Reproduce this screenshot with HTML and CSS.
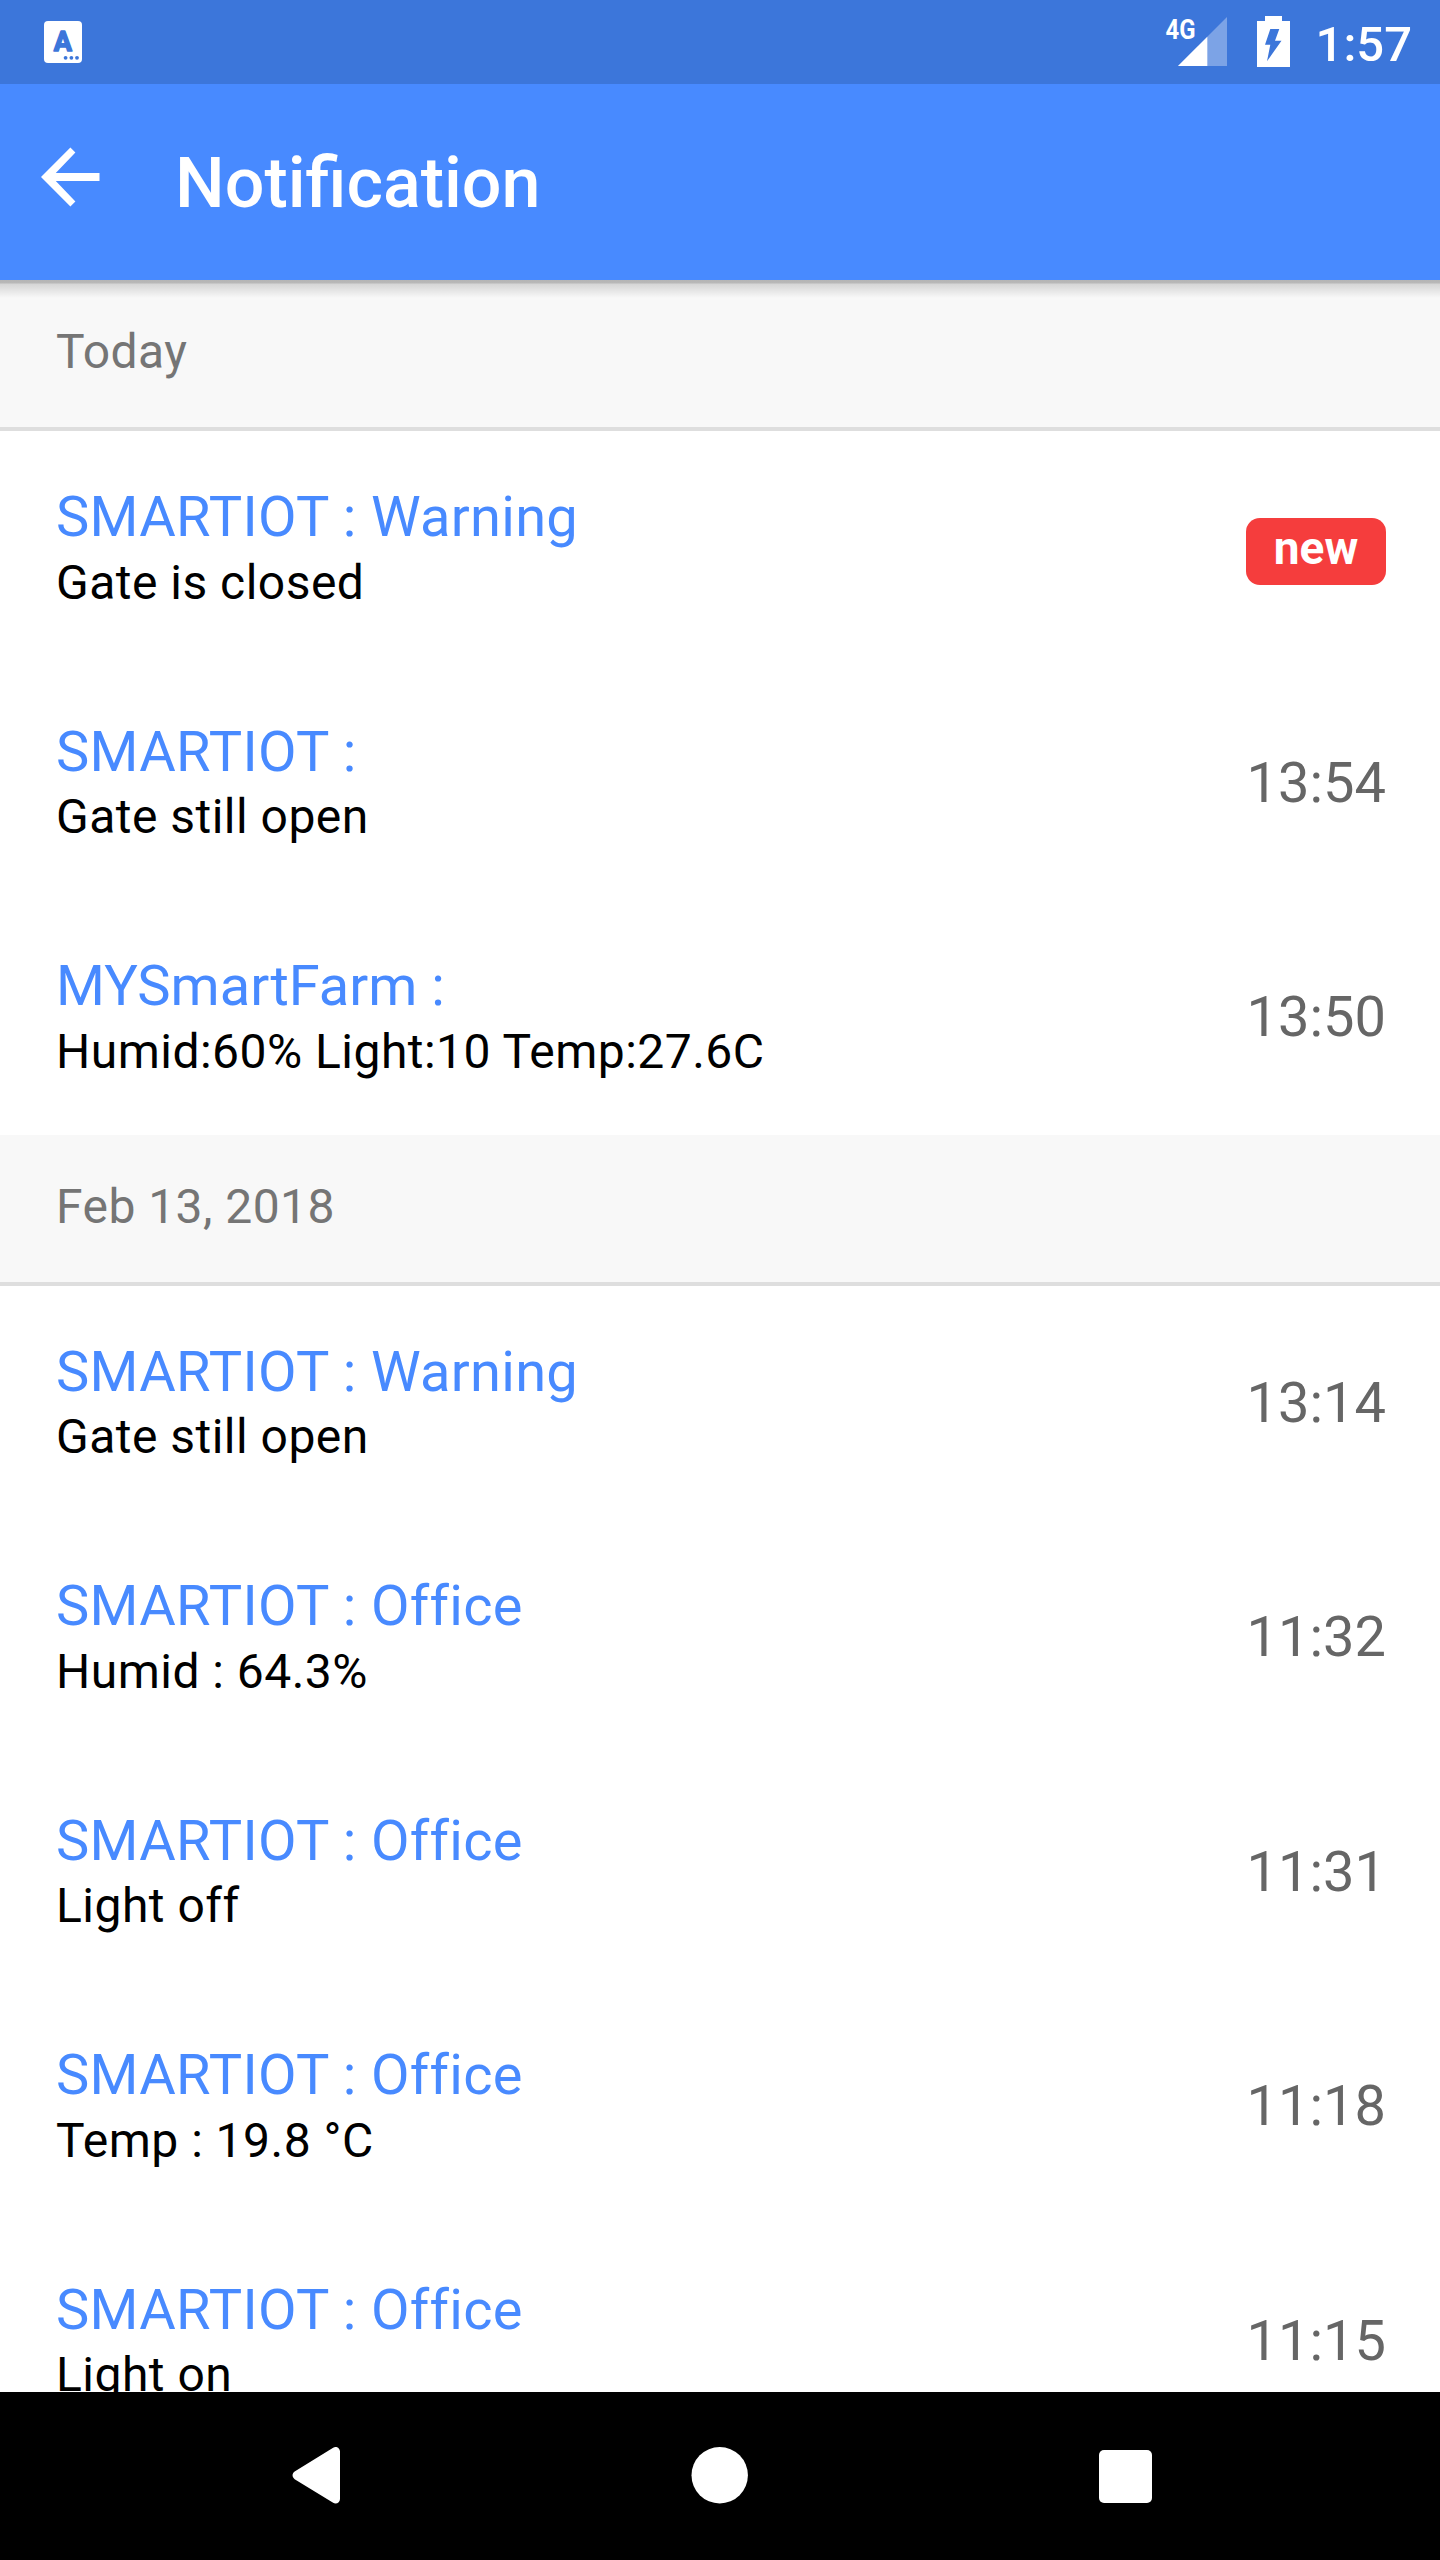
FILE: index.html
```html
<!DOCTYPE html>
<html lang="en">
<head>
    <meta charset="UTF-8">
    <meta name="viewport" content="width=device-width, initial-scale=1.0">
    <title>Notification</title>
    <link rel="stylesheet" href="styles.css">
</head>
<body>
    <div class="status-bar">
        <svg class="app-icon" width="38" height="42" viewBox="0 0 38 42">
            <rect width="38" height="42" rx="4" fill="#fff"/>
            <text class="app-letter" x="18.8" y="30" text-anchor="middle">A</text>
            <circle cx="21.6" cy="36.8" r="1.9"/>
            <circle cx="27.4" cy="36.8" r="1.9"/>
            <circle cx="33" cy="36.8" r="1.9"/>
        </svg>
        <div class="status-right">
            <svg class="signal" width="62" height="84" viewBox="0 0 62 84">
                <path d="M62 17V66H13Z" fill="#fff" fill-opacity=".33"/>
                <path d="M42.3 36.7V66H13Z" fill="#fff"/>
                <text class="network" x="0.5" y="39" textLength="30" lengthAdjust="spacingAndGlyphs">4G</text>
            </svg>
            <svg class="battery" width="33" height="51" viewBox="0 0 33 51">
                <path d="M8 0H25V5H33V51H0V5H8Z" fill="#fff"/>
                <path d="M13.3 13H22.3L18 24.7H24.5L10 45.3L13.3 28.7H8Z" fill="#3c76da"/>
            </svg>
            <span class="clock">1:57</span>
        </div>
    </div>

    <header class="toolbar">
        <svg class="back" width="60" height="60" viewBox="0 0 60 60">
            <path d="M0 30L29.4 .6L34.4 5.6L14.8 26H58.5V34H14.8L34.4 54.4L29.4 59.4Z" fill="#fff"/>
        </svg>
        <h1>Notification</h1>
    </header>

    <main class="content">
        <h2 class="divider">Today</h2>
        <div class="item">
            <div class="label">
                <p class="title">SMARTIOT : Warning</p>
                <p class="message">Gate is closed</p>
            </div>
            <span class="badge">new</span>
        </div>
        <div class="item">
            <div class="label">
                <p class="title">SMARTIOT :</p>
                <p class="message">Gate still open</p>
            </div>
            <span class="time">13:54</span>
        </div>
        <div class="item">
            <div class="label">
                <p class="title farm">MYSmartFarm :</p>
                <p class="message">Humid:60% Light:10 Temp:27.6C</p>
            </div>
            <span class="time">13:50</span>
        </div>

        <h2 class="divider">Feb 13, 2018</h2>
        <div class="item">
            <div class="label">
                <p class="title">SMARTIOT : Warning</p>
                <p class="message">Gate still open</p>
            </div>
            <span class="time">13:14</span>
        </div>
        <div class="item">
            <div class="label">
                <p class="title">SMARTIOT : Office</p>
                <p class="message">Humid : 64.3%</p>
            </div>
            <span class="time">11:32</span>
        </div>
        <div class="item">
            <div class="label">
                <p class="title">SMARTIOT : Office</p>
                <p class="message">Light off</p>
            </div>
            <span class="time">11:31</span>
        </div>
        <div class="item">
            <div class="label">
                <p class="title">SMARTIOT : Office</p>
                <p class="message">Temp : 19.8 °C</p>
            </div>
            <span class="time">11:18</span>
        </div>
        <div class="item">
            <div class="label">
                <p class="title">SMARTIOT : Office</p>
                <p class="message">Light on</p>
            </div>
            <span class="time">11:15</span>
        </div>
    </main>

    <nav class="nav-bar">
        <svg width="60" height="60" viewBox="0 0 60 60">
            <path d="M13 30.3L51.5 6.5V54Z" fill="#fff" stroke="#fff" stroke-width="9" stroke-linejoin="round"/>
        </svg>
        <svg width="60" height="60" viewBox="0 0 60 60">
            <circle cx="29.7" cy="30.3" r="28.2" fill="#fff"/>
        </svg>
        <svg width="60" height="60" viewBox="0 0 60 60">
            <rect x="3" y="5" width="53" height="53" rx="5" fill="#fff"/>
        </svg>
    </nav>
</body>
</html>
```
FILE: styles.css
```css
* {
    box-sizing: border-box;
}
body {
    display: flex;
    flex-direction: column;
    height: 2560px;
    margin: 0;
    background: #fff;
    font-family: Roboto, sans-serif;
    overflow: hidden;
}
h1, h2, p {
    margin: 0;
    font-weight: 400;
}
svg {
    display: block;
    flex: none;
}

/* Status bar */
.status-bar {
    display: flex;
    flex: none;
    justify-content: space-between;
    height: 84px;
    padding: 0 28px 0 44px;
    background: #3c76da;
    color: #fff;
}
.app-icon {
    margin-top: 21px;
    fill: #3c76da;
}
.app-letter {
    font-size: 27px;
    font-weight: 700;
    stroke: #3c76da;
    stroke-width: 1.5px;
    stroke-linejoin: round;
}
.status-right {
    display: flex;
}
.network {
    fill: #fff;
    font-size: 28px;
    font-weight: 700;
}
.battery {
    margin: 16px 0 0 30px;
}
.clock {
    margin-left: 26px;
    font-size: 49px;
    font-weight: 500;
    line-height: 89px;
}

/* Toolbar */
.toolbar {
    position: relative;
    z-index: 1;
    display: flex;
    flex: none;
    height: 196px;
    padding-left: 41px;
    background: #488aff;
    color: #fff;
}
/* shadow cast on the list */
.toolbar::after {
    content: "";
    position: absolute;
    top: 100%;
    left: 0;
    width: 100%;
    height: 18px;
    background: linear-gradient(rgba(0, 0, 0, .27) 0, rgba(0, 0, 0, .26) 3px, rgba(0, 0, 0, .14) 4px, rgba(0, 0, 0, .1) 8px, rgba(0, 0, 0, 0));
}
.back {
    margin-top: 63px;
}
.toolbar h1 {
    margin-left: 74px;
    font-size: 70px;
    font-weight: 500;
    line-height: 199px;
}

/* List */
.content {
    flex: 1;
    min-height: 0;
    overflow: hidden;
}
.divider {
    height: 151px;
    padding-left: 56px;
    border-bottom: 4px solid #dedede;
    background: #f8f8f8;
    color: #757575;
    font-size: 48px;
    letter-spacing: .45px;
    line-height: 143px;
}
.item {
    display: flex;
    justify-content: space-between;
    height: 234.5px;
    padding: 0 54px 0 56px;
}
.label {
    padding-top: 53px;
}
.title {
    color: #488aff;
    font-size: 56px;
    letter-spacing: .3px;
    line-height: 66px;
}
.title.farm {
    letter-spacing: 0;
}
.message {
    margin-top: 2.6px;
    color: #000;
    font-size: 48px;
    letter-spacing: .48px;
    line-height: 60px;
}
.time {
    color: #666;
    font-size: 56px;
    line-height: 235px;
}
.badge {
    width: 140px;
    height: 67px;
    margin-top: 87px;
    border-radius: 14px;
    background: #f53d3d;
    color: #fff;
    font-size: 46px;
    font-weight: 700;
    line-height: 60px;
    text-align: center;
}

/* Navigation buttons */
.nav-bar {
    display: flex;
    flex: none;
    justify-content: space-between;
    align-items: center;
    height: 168px;
    padding: 0 284px 2px;
    background: #000;
}
```
